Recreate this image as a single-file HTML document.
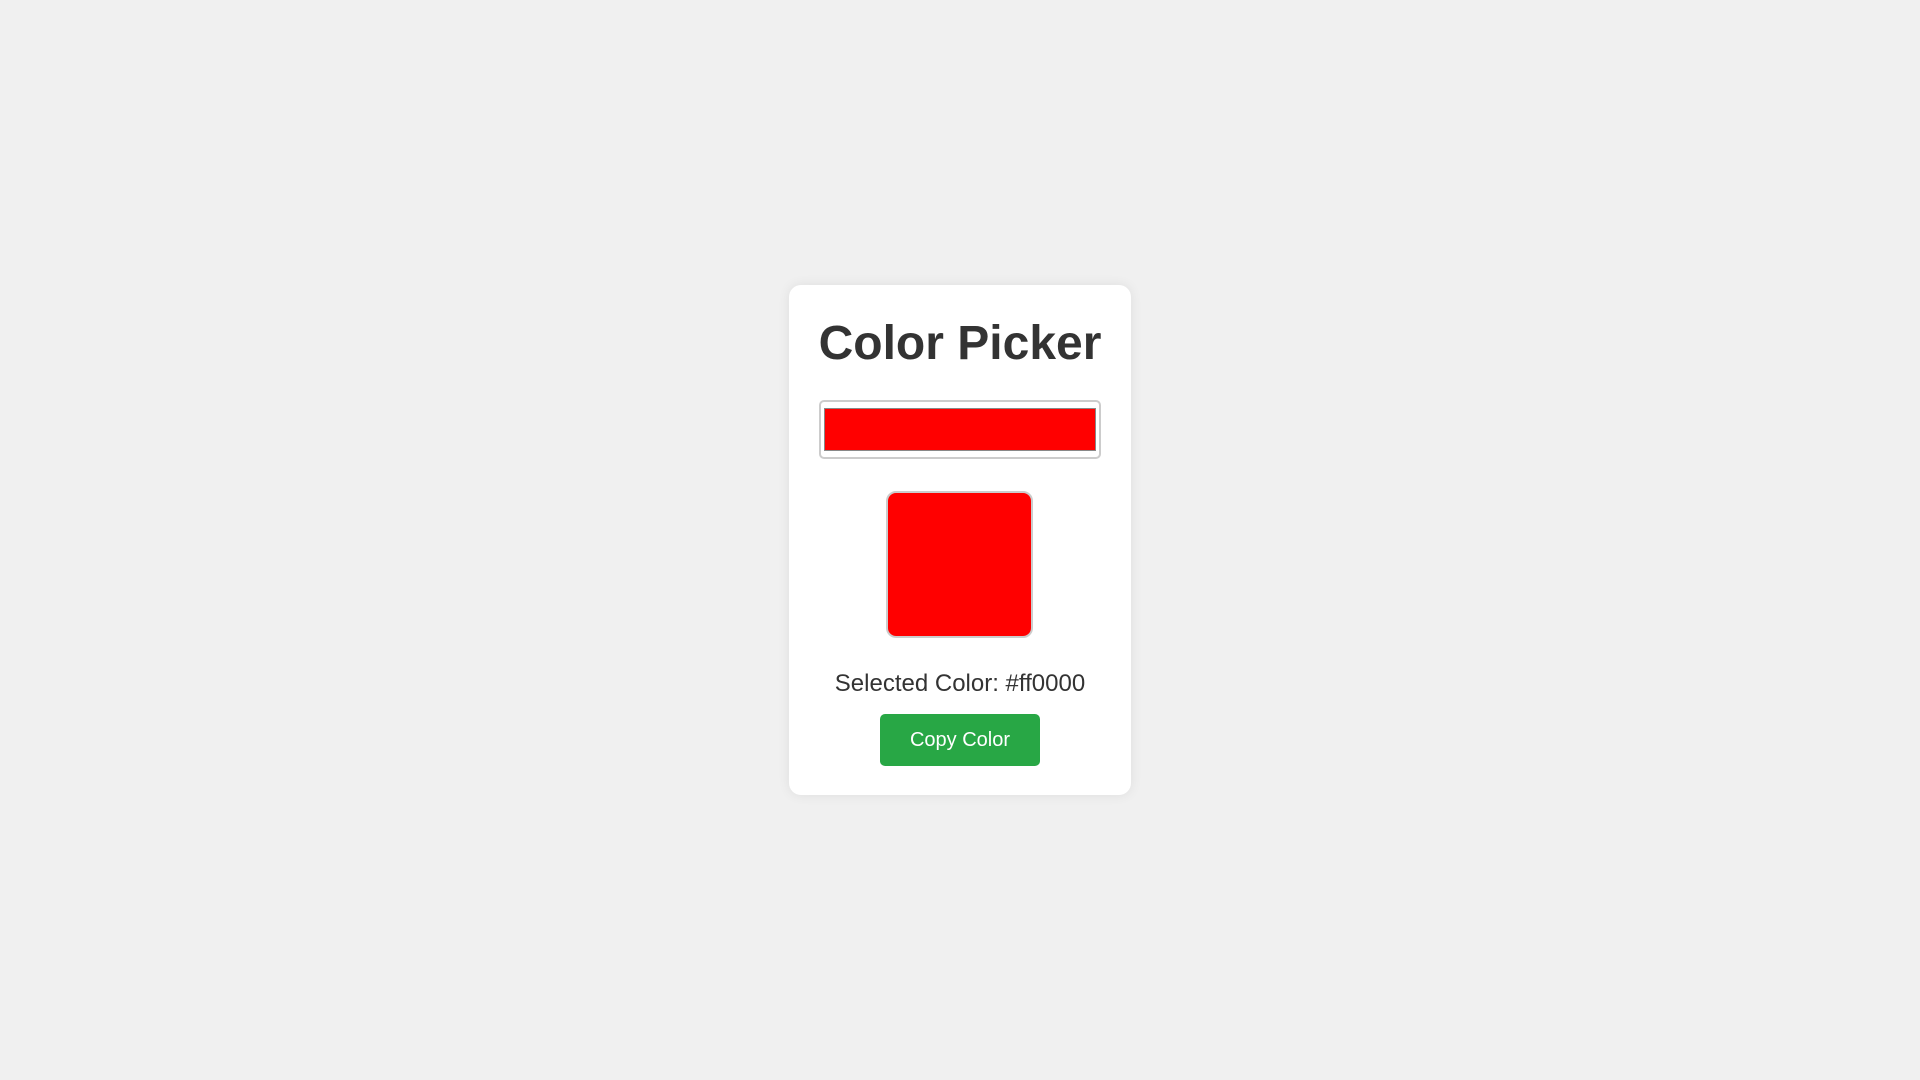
<!DOCTYPE html>
<html><head><meta charset="utf-8"><style>
html,body{margin:0;padding:0;background:#f0f0f0;width:1920px;height:1080px;overflow:hidden;font-family:"Liberation Sans",Arial,sans-serif;}
.card{position:absolute;left:789px;top:285px;width:342px;height:510px;background:#fff;border-radius:12px;box-shadow:0 0 12px rgba(0,0,0,0.08);}
h1{position:absolute;left:0;width:342px;top:316px;margin:0;text-align:center;font-size:48px;line-height:56px;color:#333;font-weight:bold;}
.inp{position:absolute;left:819px;top:400px;width:278px;height:55px;border:2px solid #ccc;border-radius:5px;background:#fff;}
.inp div{position:absolute;left:3px;top:6px;right:3px;bottom:6px;background:#f00;border:1px solid #888;}
.prev{position:absolute;left:886px;top:491px;width:143px;height:143px;border:2px solid #ccc;border-radius:10px;background:#f00;}
.txt{position:absolute;left:789px;width:342px;top:670px;text-align:center;font-size:24px;line-height:28px;color:#333;}
.btn{position:absolute;left:880px;top:714px;width:160px;height:52px;background:#28a745;border-radius:5px;color:#fff;font-size:20px;line-height:52px;text-align:center;}
</style></head><body>
<div class="card"></div>
<h1 style="left:789px">Color Picker</h1>
<div class="inp"><div></div></div>
<div class="prev"></div>
<div class="txt">Selected Color: #ff0000</div>
<div class="btn">Copy Color</div>
</body></html>
